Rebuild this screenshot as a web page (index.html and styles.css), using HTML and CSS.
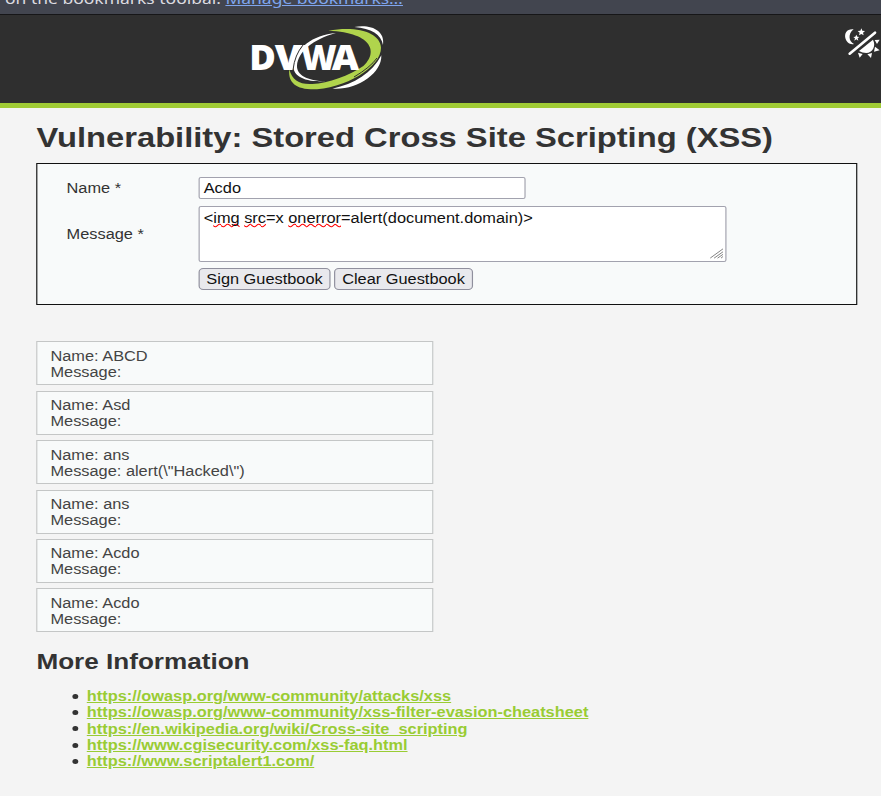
FILE: index.html
```
<!DOCTYPE html>
<html lang="en">
<head>
<meta charset="utf-8">
<title>Vulnerability: Stored Cross Site Scripting (XSS)</title>
<link rel="stylesheet" href="styles.css">
</head>
<body>
<div class="toolbar"><div class="toolbar-text">on the bookmarks toolbar. <a href="#">Manage bookmarks…</a></div></div>
<header class="header">
  <svg class="logo" viewBox="0 0 480 255" role="img" aria-label="DVWA">
    <path fill="#fff" d="M288 54C218 60 166 100 160 150C158 185 195 201 258 200C200 196 170 180 171 152C174 110 220 72 288 54Z"/>
    <path fill="#fff" d="M343 36C392 27 436 46 429 90C424 59 394 40 343 36Z"/>
    <path fill="#fff" d="M424 121C426 176 349 227 277 221C343 207 397 174 424 121Z"/>
    <path fill="#b0d44c" d="M265 47C352 31 421 53 423 98C424 155 316 223 212 223C160 221 144 196 148 163C157 197 178 209 217 207C265 206 328 181 370 153C412 116 405 53 265 47Z"/>
    <path fill="none" stroke="#2f2f2f" stroke-width="3" d="M342 186Q391 157 411 129"/>
    <text class="logo-text" y="164"><tspan x="28" textLength="80" lengthAdjust="spacingAndGlyphs">D</tspan><tspan x="104" textLength="82" lengthAdjust="spacingAndGlyphs">V</tspan><tspan x="182" textLength="108" lengthAdjust="spacingAndGlyphs">W</tspan><tspan x="275" textLength="82" lengthAdjust="spacingAndGlyphs">A</tspan></text>
    <path fill="none" stroke="#2f2f2f" stroke-width="3" d="M190 89Q164 119 159 165"/>
  </svg>
  <svg class="theme" viewBox="0 0 150 165" fill="#fff" role="img" aria-label="Theme">
    <path d="M68 43C47 41 40 55 43 69C46 82 57 90 69 87C53 80 50 56 68 43Z"/>
    <path d="M91 40L94 47L102 48L96 53L98 61L91 57L84 61L86 53L80 48L88 47Z"/>
    <path d="M76 59L79 65L85 66L80 70L82 77L76 73L70 77L72 70L67 66L73 65Z"/>
    <path d="M56 116L132 53" stroke="#fff" stroke-width="8" stroke-linecap="round"/>
    <path d="M84 108L126 74C136 94 124 113 106 114Q94 114 84 108Z"/>
    <path d="M131 75L146 74L138 87ZM132 95L146 106L129 110ZM109 118L123 114L120 129ZM81 113L95 117L86 128Z"/>
  </svg>
</header>
<main class="page">
  <h1>Vulnerability: Stored Cross Site Scripting (XSS)</h1>
  <form class="form">
    <div class="row name-row"><label>Name *</label><div class="field name">Acdo</div></div>
    <div class="row message-row"><label>Message *</label>
      <div class="field message">&lt;<span class="sp">img</span> <span class="sp">src</span>=x <span class="sp">onerror</span>=alert(document.domain)&gt;
        <svg class="grip" viewBox="0 0 13 11"><path d="M0 11L13 0M4 11L13 3.5M7.5 11L13 6.5M11 11L13 9" stroke="#777" fill="none"/></svg>
      </div></div>
    <div class="row buttons"><button type="button" class="sign">Sign Guestbook</button><button type="button" class="clear">Clear Guestbook</button></div>
  </form>
  <section class="entries">
    <div class="entry">Name: ABCD<br>Message:</div>
    <div class="entry">Name: Asd<br>Message:</div>
    <div class="entry">Name: ans<br>Message: alert(\"Hacked\")</div>
    <div class="entry">Name: ans<br>Message:</div>
    <div class="entry">Name: Acdo<br>Message:</div>
    <div class="entry">Name: Acdo<br>Message:</div>
  </section>
  <h2>More Information</h2>
  <ul>
    <li><a href="#">https://owasp.org/www-community/attacks/xss</a></li>
    <li><a href="#">https://owasp.org/www-community/xss-filter-evasion-cheatsheet</a></li>
    <li><a href="#">https://en.wikipedia.org/wiki/Cross-site_scripting</a></li>
    <li><a href="#">https://www.cgisecurity.com/xss-faq.html</a></li>
    <li><a href="#">https://www.scriptalert1.com/</a></li>
  </ul>
</main>
</body>
</html>
```
FILE: styles.css
```
* { box-sizing: border-box; }
html, body { height: 796px; overflow: hidden; }
body { margin: 0; background: #f4f4f4; color: #333; }
.toolbar { height: 15px; background: #42454f; border-bottom: 1px solid #161618; overflow: hidden; }
.toolbar-text {
  margin: -12px 0 0 4.5px; font: 15px/20px "Noto Sans", sans-serif; color: #dcdce0;
  white-space: pre; transform: scaleX(1.165); transform-origin: 0 0; width: 400px;
}
.toolbar-text a { color: #7fa5ee; }
.header {
  height: 93px; background: #2f2f2f; border-bottom: 5px solid #a0cb35;
  display: flex; justify-content: space-between; padding-left: 240px;
}
.logo { width: 160px; height: 85px; }
.logo-text { font: 800 104px "Open Sans", "Noto Sans", sans-serif; fill: #fff; }
.theme { width: 50px; height: 55px; }

/* The page is drawn wider than its natural width. */
.page {
  --k: 1.168;
  width: calc(881px / var(--k)); transform: scaleX(1.168); transform-origin: 0 0;
  padding: 12px calc(23.6px / var(--k)) 0 calc(36.4px / var(--k));
  font: 14px/16px "Liberation Sans", Arial, sans-serif;
}
h1 { margin: 0; font-size: 28px; line-height: 36px; height: 43px; white-space: nowrap; }
.form {
  height: 142px; border: 1px solid #111; background: #f8fafa;
  padding: 13px 0 0 calc(29px / var(--k));
}
.row { display: flex; align-items: center; }
.row label { width: calc(132px / var(--k)); flex: none; }
.field { background: #fff; border: 1px solid #a2a2ae; border-radius: 2px; color: #111; padding-left: calc(4px / var(--k)); }
.name { width: calc(327px / var(--k)); height: 22px; line-height: 21px; }
.message-row { margin-top: 7px; }
.message { position: relative; width: calc(528px / var(--k)); height: 56px; padding-top: 3px; white-space: nowrap; }
.sp { text-decoration: underline wavy red 1px; text-decoration-skip-ink: none; text-underline-offset: 0; }
.grip { position: absolute; right: 2px; bottom: 2px; width: 11px; height: 11px; }
.buttons { margin: 6px 0 0 calc(132px / var(--k)); gap: calc(4px / var(--k)); }
button {
  height: 22px; padding: 0; font: 14px/18px "Liberation Sans", Arial, sans-serif; color: #111;
  background: #e9e9ed; border: 1px solid #8f8f9d; border-radius: 4px; white-space: nowrap;
}
.sign { width: calc(132px / var(--k)); }
.clear { width: calc(138px / var(--k)); }
.entries { margin-top: 36.4px; display: grid; row-gap: 5.4px; width: calc(397px / var(--k)); }
.entry { height: 44px; border: 1px solid #c4c6c6; background: #f8fafa; padding: 5.5px 0 0 calc(12.9px / var(--k)); color: #444; }
h2 { margin: 16.4px 0 0; font-size: 22.35px; line-height: 26px; }
ul { margin: 13.2px 0 0; padding-left: calc(50.4px / var(--k)); list-style: none; }
li { display: flex; align-items: center; height: 16.4px; line-height: 16.4px; }
li::before {
  content: ""; width: calc(5.5px / var(--k)); height: 5px; border-radius: 50%; background: #333;
  margin: 0 calc(9px / var(--k)) 0 calc(-14.5px / var(--k));
}
li a { color: #9c3; font-weight: bold; }
```
